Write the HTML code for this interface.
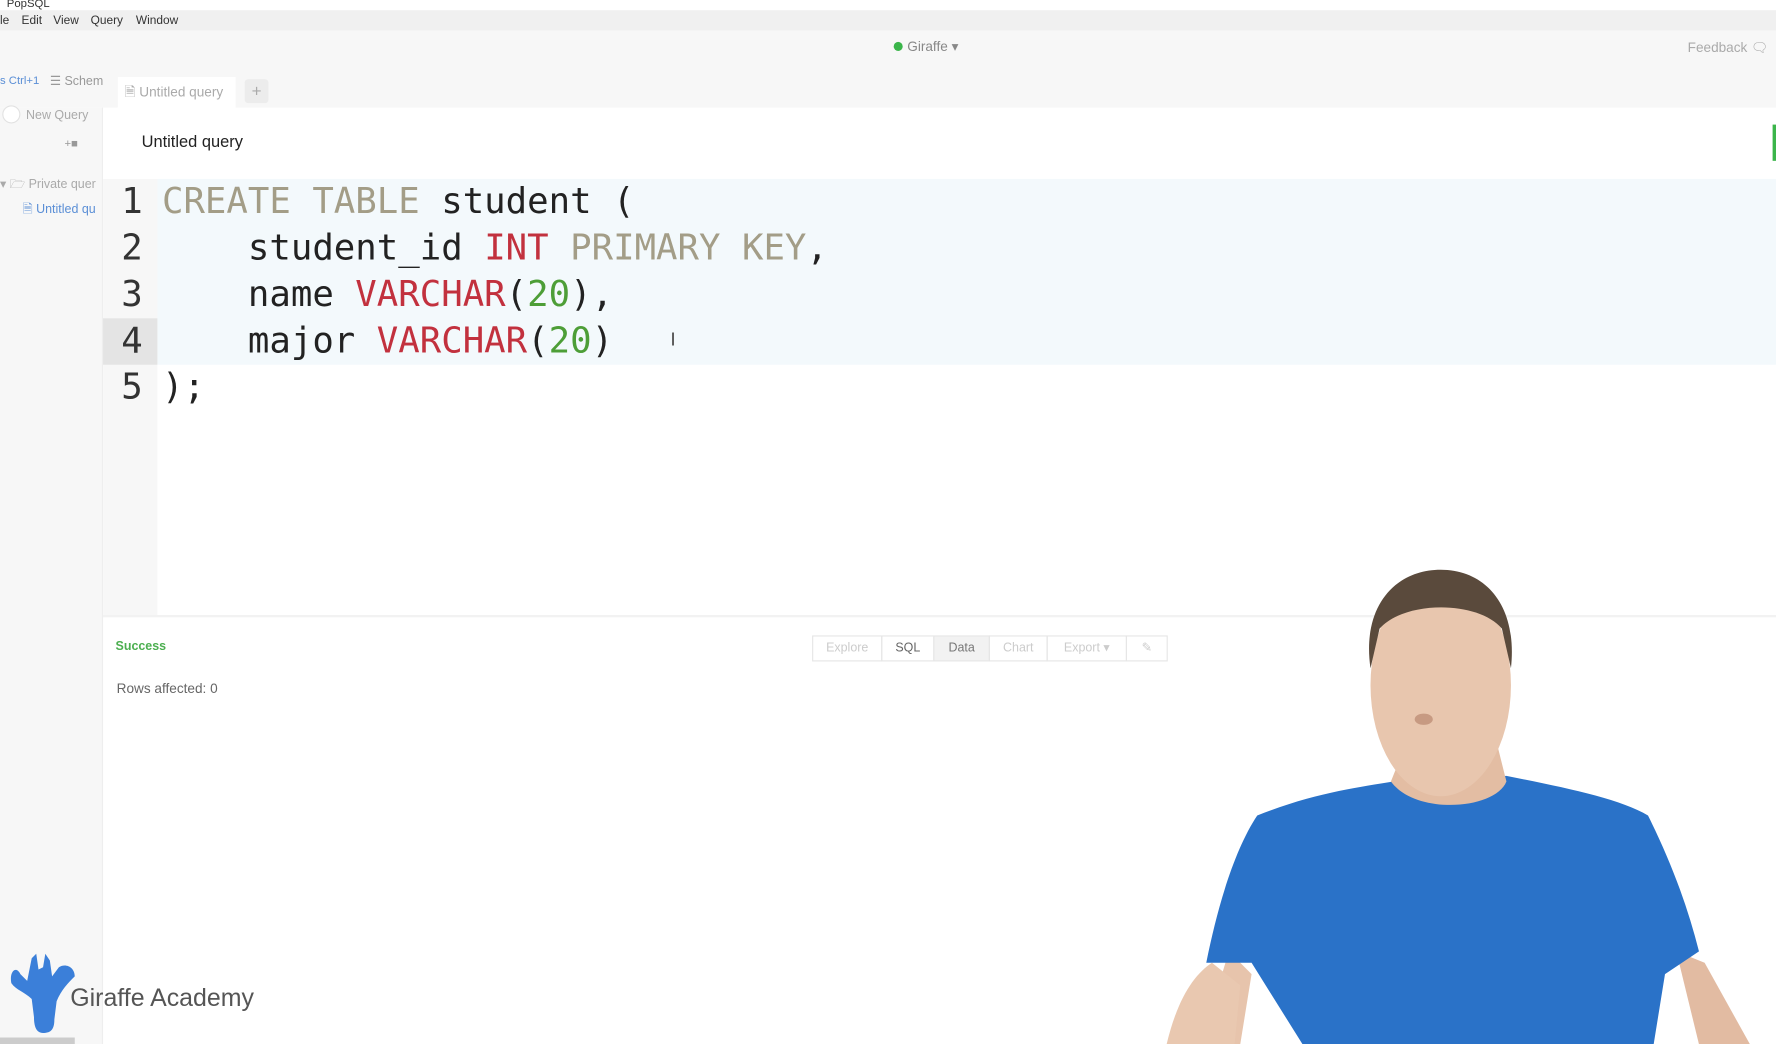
<!DOCTYPE html>
<html><head><meta charset="utf-8"><style>
*{margin:0;padding:0;box-sizing:border-box}
html,body{width:1776px;height:1044px;overflow:hidden;background:#fff}
#w{position:absolute;left:0;top:0;width:1568px;height:922px;transform:scale(1.13265);transform-origin:0 0;font-family:"Liberation Sans",sans-serif;color:#333}
.a{position:absolute}
.code{font-family:"DejaVu Sans Mono","Liberation Mono",monospace;font-size:31.5px;line-height:41px;white-space:pre;color:#222}
.k{color:#a39d87}.r{color:#c2313e}.g{color:#4d9e37}
.btn{position:absolute;top:561px;height:23px;border:1px solid #e6e6e6;font-size:11px;color:#ccc;text-align:center;line-height:21px}
</style></head><body><div id="w">
<div class="a" style="left:0;top:0;width:1568px;height:9px;background:#fff;font-size:10px;line-height:8px;padding-left:6px;color:#333;overflow:hidden">PopSQL</div>
<div class="a" style="left:0;top:9px;width:1568px;height:18px;background:#f0f0f0;font-size:10.5px;line-height:18px;color:#333">
<span style="position:absolute;left:0">le</span><span style="position:absolute;left:19px">Edit</span><span style="position:absolute;left:47px">View</span><span style="position:absolute;left:80px">Query</span><span style="position:absolute;left:120px">Window</span></div>
<div class="a" style="left:0;top:27px;width:1568px;height:68px;background:#f7f7f7"></div>
<div class="a" style="left:789px;top:37px;width:8px;height:8px;border-radius:50%;background:#3bb54a"></div>
<div class="a" style="left:801px;top:34px;font-size:12px;color:#888">Giraffe ▾</div>
<div class="a" style="left:1490px;top:35px;font-size:12px;color:#aaa">Feedback 🗨</div>
<div class="a" style="left:0;top:66px;font-size:10px;color:#5b8fd6">s Ctrl+1</div>
<div class="a" style="left:44px;top:65px;font-size:11px;color:#999">☰ Schem</div>
<div class="a" style="left:104px;top:68px;width:104px;height:28px;background:#fff;font-size:12px;color:#aaa;line-height:26px;padding-left:6px">🗎 Untitled query</div>
<div class="a" style="left:216px;top:70px;width:21px;height:21px;background:#ececec;border-radius:3px;color:#aaa;text-align:center;line-height:21px;font-size:15px">+</div>
<div class="a" style="left:0;top:95px;width:91px;height:827px;background:#f7f7f7;border-right:1px solid #eee"></div>
<div class="a" style="left:2px;top:93px;width:16px;height:16px;border-radius:50%;background:#fff;border:1px solid #e2e2e2"></div>
<div class="a" style="left:23px;top:96px;font-size:11px;color:#aaa">New Query</div>
<div class="a" style="left:57px;top:122px;font-size:10px;color:#999">+■</div>
<div class="a" style="left:0;top:154px;font-size:11px;color:#aaa;white-space:nowrap;width:91px;overflow:hidden">▾ 🗁 Private quer</div>
<div class="a" style="left:20px;top:176px;font-size:11px;color:#5b8fd6;white-space:nowrap;width:71px;overflow:hidden">🗎 Untitled qu</div>
<div class="a" style="left:91px;top:96px;width:1477px;height:62px;background:#fff"></div>
<div class="a" style="left:125px;top:118px;font-size:14.5px;color:#222">Untitled query</div>
<div class="a" style="left:1565px;top:110px;width:3px;height:32px;background:#3bb54a"></div>
<div class="a" style="left:91px;top:158px;width:48px;height:385px;background:#f7f7f7"></div>
<div class="a" style="left:91px;top:281px;width:48px;height:41px;background:#e4e4e4"></div>
<div class="a" style="left:139px;top:158px;width:1429px;height:164px;background:#f3f9fc"></div>
<div class="a code" style="left:107px;top:158px;color:#333">1
2
3
4
5</div>
<div class="a code" style="left:143px;top:158px"><span class="k">CREATE TABLE</span> student (
    student_id <span class="r">INT</span> <span class="k">PRIMARY KEY</span>,
    name <span class="r">VARCHAR</span>(<span class="g">20</span>),
    major <span class="r">VARCHAR</span>(<span class="g">20</span>)
);</div>
<div class="a" style="left:592px;top:292px;font-size:16px;color:#444">I</div>
<div class="a" style="left:91px;top:543px;width:1477px;height:2px;background:#f2f2f2"></div>
<div class="a" style="left:102px;top:565px;font-size:11px;font-weight:bold;color:#4caf50">Success</div>
<div class="a" style="left:103px;top:601px;font-size:12px;color:#666">Rows affected: 0</div>
<div class="btn" style="left:717px;width:62px">Explore</div>
<div class="btn" style="left:778px;width:47px;color:#666">SQL</div>
<div class="btn" style="left:824px;width:50px;color:#777;background:#f2f2f2">Data</div>
<div class="btn" style="left:873px;width:52px">Chart</div>
<div class="btn" style="left:924px;width:71px">Export ▾</div>
<div class="btn" style="left:994px;width:37px">✎</div>
<svg class="a" style="left:0;top:840px" width="80" height="82" viewBox="0 0 80 82">
<path d="M10 28 C8 18 14 12 18 20 L24 26 L28 6 L32 2 L34 16 L38 14 L40 2 L44 8 L46 22 L52 14 C58 10 66 14 66 22 C60 28 54 34 50 44 L48 60 C48 70 44 72 38 72 C32 72 30 66 30 58 L28 42 C22 36 14 34 10 28Z" fill="#3b7fd9"/>
<rect x="0" y="76" width="66" height="6" fill="#ccc"/></svg>
<div class="a" style="left:62px;top:868px;font-size:22px;color:#555">Giraffe Academy</div>
<svg class="a" style="left:1020px;top:490px" width="548" height="432" viewBox="1020 490 548 432">
<path d="M1060 922 L1085 840 L1105 860 L1095 922Z" fill="#e7c4ac"/>
<path d="M1480 840 L1505 850 L1545 922 L1500 922Z" fill="#e2bba2"/>
<path d="M1030 922 C1040 880 1055 860 1070 850 L1095 870 L1090 922Z" fill="#e9c8b0"/>
<path d="M1110 720 C1160 700 1200 695 1230 690 L1330 685 C1380 695 1430 705 1455 720 C1475 760 1490 800 1500 840 L1470 860 L1460 922 L1150 922 L1105 850 L1065 850 C1075 800 1090 750 1110 720Z" fill="#2a72c8"/>
<path d="M1228 690 C1250 720 1320 715 1330 690 L1320 650 L1240 660Z" fill="#e3bda3"/>
<ellipse cx="1272" cy="605" rx="62" ry="98" fill="#e8c6ae"/>
<path d="M1210 590 C1202 535 1232 503 1272 503 C1312 503 1340 535 1334 590 L1326 555 C1305 530 1240 530 1218 555Z" fill="#5a4a3c"/>
<ellipse cx="1257" cy="635" rx="8" ry="5" fill="#c79a82"/>
</svg>
</div></body></html>
